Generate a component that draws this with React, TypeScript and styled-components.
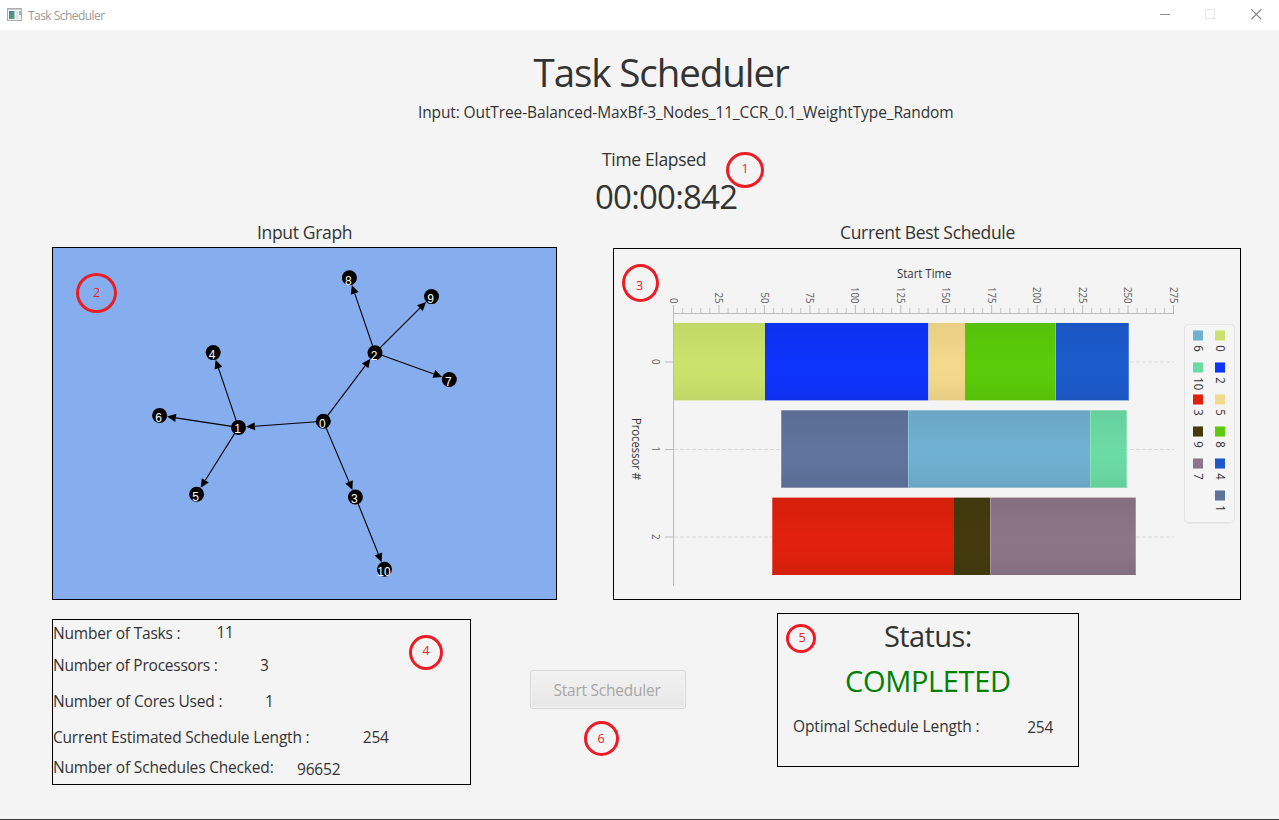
import React from 'react';
import styled, { createGlobalStyle } from 'styled-components';

const UI_FONT = '"Open Sans", "Noto Sans", sans-serif';

const GlobalStyle = createGlobalStyle`
  html, body { margin: 0; padding: 0; background: #f4f4f4; }
  * { box-sizing: border-box; }
`;

const Window = styled.div`
  position: relative;
  display: flex;
  flex-direction: column;
  width: 1279px;
  height: 820px;
  overflow: hidden;
  background: #f4f4f4;
  border-bottom: 1px solid #3a3a3a;
  color: #333;
  font-family: ${UI_FONT};
`;

const TitleBar = styled.header`
  display: flex;
  align-items: center;
  height: 30px;
  flex: none;
  padding-left: 7px;
  padding-right: 17px;
  background: #fff;
`;

const WindowTitle = styled.span`
  flex: 1;
  margin-left: 5px;
  font-size: 12px;
  line-height: 17px;
  letter-spacing: -0.55px;
  color: #999;
`;

const WindowControls = styled.div`
  display: flex;
  gap: 35px;
  height: 11px;
  margin-bottom: 1px;
`;

const Line = styled.div<{ $size: number; $height: number; $left?: number; $top?: number; $spacing?: number; $color?: string }>`
  font-size: ${(p) => p.$size}px;
  line-height: ${(p) => p.$height}px;
  margin-left: ${(p) => p.$left ?? 0}px;
  margin-top: ${(p) => p.$top ?? 0}px;
  letter-spacing: ${(p) => p.$spacing ?? 0}px;
  color: ${(p) => p.$color ?? 'inherit'};
  white-space: nowrap;
`;

const Heading = styled.section`
  display: flex;
  flex-direction: column;
  height: 190px;
  flex: none;
  padding-top: 18px;
`;

const Panels = styled.section`
  display: flex;
  height: 380px;
  flex: none;
  padding-left: 52px;
  gap: 56px;
`;

const PanelColumn = styled.div<{ $width: number }>`
  display: flex;
  flex-direction: column;
  justify-content: space-between;
  width: ${(p) => p.$width}px;
`;

const Frame = styled.div<{ $height: number; $fill?: string }>`
  height: ${(p) => p.$height}px;
  border: 1px solid #000;
  background: ${(p) => p.$fill ?? 'transparent'};
  svg { display: block; }
`;

const Footer = styled.section`
  display: flex;
  align-items: flex-start;
  padding-left: 52px;
`;

const StatsBox = styled.div`
  width: 419px;
  height: 166px;
  margin-top: 19px;
  padding-top: 1px;
  border: 1px solid #000;
`;

const StatusBox = styled.div`
  width: 302px;
  height: 154px;
  margin-top: 13px;
  margin-left: 91px;
  padding-top: 1px;
  border: 1px solid #000;
`;

const Row = styled.div<{ $top: number; $left?: number }>`
  display: flex;
  align-items: flex-start;
  height: 22px;
  margin-top: ${(p) => p.$top}px;
  margin-left: ${(p) => p.$left ?? 0}px;
  font-size: 15.5px;
  line-height: 22px;
  white-space: nowrap;
`;

const RowLabel = styled.span<{ $width: number; $spacing: number; $drop?: number }>`
  flex: none;
  width: ${(p) => p.$width}px;
  padding-top: ${(p) => p.$drop ?? 0}px;
  letter-spacing: ${(p) => p.$spacing}px;
`;

const RowValue = styled.span<{ $drop?: number }>`
  padding-top: ${(p) => p.$drop ?? 0}px;
  letter-spacing: -0.2px;
`;

const StartButton = styled.button`
  width: 156px;
  height: 39px;
  margin: 70px 0 0 59px;
  padding: 0 2px 0 0;
  border: 1px solid #d6d6d6;
  border-radius: 3px;
  background: linear-gradient(#f2f2f2, #e7e7e7);
  box-shadow: inset 0 0 0 1px #f3f3f3;
  font-family: ${UI_FONT};
  font-size: 15.5px;
  line-height: 22px;
  letter-spacing: -0.24px;
  color: #a6a6a6;
`;

const Callout = styled.div<{ $x: number; $y: number; $w: number; $h: number; $pad: number; $shift?: number }>`
  position: absolute;
  left: ${(p) => p.$x}px;
  top: ${(p) => p.$y}px;
  width: ${(p) => p.$w}px;
  height: ${(p) => p.$h}px;
  padding-top: ${(p) => p.$pad}px;
  border: 3px solid #ed1c24;
  border-radius: 50%;
  font-size: 12.5px;
  line-height: 17px;
  text-align: center;
  text-indent: ${(p) => p.$shift ?? 0}px;
  color: #ed1c24;
`;

type GraphNode = { x: number; y: number; base: number };

const nodes: GraphNode[] = [
  { x: 323.3, y: 421.3, base: 428 },
  { x: 238.5, y: 427.4, base: 433 },
  { x: 375, y: 352.8, base: 360 },
  { x: 355.4, y: 497, base: 503 },
  { x: 213.2, y: 352.6, base: 359 },
  { x: 196.6, y: 494.2, base: 501 },
  { x: 159.6, y: 415.4, base: 422 },
  { x: 449.3, y: 379.5, base: 386 },
  { x: 349.4, y: 277.8, base: 285 },
  { x: 431.5, y: 296.6, base: 303 },
  { x: 384.5, y: 569.2, base: 576 },
];

const edges: [number, number][] = [
  [0, 1], [0, 2], [0, 3], [1, 4], [1, 5], [1, 6], [2, 7], [2, 8], [2, 9], [3, 10],
];

function Edge({ from, to }: { from: GraphNode; to: GraphNode }) {
  const length = Math.hypot(to.x - from.x, to.y - from.y);
  const ux = (to.x - from.x) / length;
  const uy = (to.y - from.y) / length;
  const tipX = to.x - ux * 7.6;
  const tipY = to.y - uy * 7.6;
  const backX = tipX - ux * 8.8;
  const backY = tipY - uy * 8.8;
  const half = 4.1;
  return (
    <g>
      <line x1={from.x} y1={from.y} x2={backX} y2={backY} stroke="#000" strokeWidth={1.1} />
      <polygon
        points={`${tipX},${tipY} ${backX - uy * half},${backY + ux * half} ${backX + uy * half},${backY - ux * half}`}
      />
    </g>
  );
}

function InputGraph() {
  return (
    <svg width={503} height={351} viewBox="53 248 503 351">
      {edges.map(([a, b]) => (
        <Edge key={`${a}-${b}`} from={nodes[a]} to={nodes[b]} />
      ))}
      {nodes.map((n, i) => (
        <g key={i}>
          <circle cx={n.x} cy={n.y} r={7.5} />
          <text
            x={i === 10 ? n.x - 0.5 : n.x - 1}
            y={n.base}
            fill="#fff"
            fontSize={12}
            fontFamily='"Liberation Sans", Arial, sans-serif'
            textAnchor="middle"
          >
            {i}
          </text>
        </g>
      ))}
    </svg>
  );
}

const taskColors = [
  '#cde26d', '#5f739c', '#0e33fb', '#e0210d', '#1c5acb', '#f3d98a',
  '#70b0d0', '#8b7587', '#5bcb0a', '#443a0d', '#6bdba5',
];

type Segment = { task: number; x1: number; x2: number };

const bars: { y: number; h: number; top: number; bottom: number; segments: Segment[] }[] = [
  {
    y: 323, h: 78, top: 0, bottom: 0.62,
    segments: [
      { task: 0, x1: 674, x2: 765 },
      { task: 2, x1: 765, x2: 928.5 },
      { task: 5, x1: 928.5, x2: 965 },
      { task: 8, x1: 965, x2: 1056 },
      { task: 4, x1: 1056, x2: 1129 },
    ],
  },
  {
    y: 410, h: 78, top: 0.32, bottom: 0.32,
    segments: [
      { task: 1, x1: 781, x2: 908 },
      { task: 6, x1: 908, x2: 1090 },
      { task: 10, x1: 1090, x2: 1127 },
    ],
  },
  {
    y: 497, h: 78, top: 0.6, bottom: 0,
    segments: [
      { task: 3, x1: 772, x2: 954 },
      { task: 9, x1: 954, x2: 990 },
      { task: 7, x1: 990, x2: 1136 },
    ],
  },
];

const lightLines = [
  [781, 1], [908, 1], [1090, 1], [1126, 1], [772, 2], [990, 2], [1135, 2], [928, 0], [1055, 0], [1128, 0],
];

const legend: { x: number; tasks: number[] }[] = [
  { x: 1215, tasks: [0, 2, 5, 8, 4, 1] },
  { x: 1193, tasks: [6, 10, 3, 9, 7] },
];

const timeToX = (t: number) => 673.5 + (t * 500) / 275;
const ticks = Array.from({ length: 56 }, (_, i) => i * 5);

function Sideways({ x, y, size, length, anchor, fill, children }: {
  x: number; y: number; size: number; length: number; anchor: 'start' | 'middle' | 'end'; fill: string; children: React.ReactNode;
}) {
  return (
    <text
      transform={`translate(${x} ${y}) rotate(90)`}
      fontSize={size}
      textAnchor={anchor}
      textLength={length}
      lengthAdjust="spacingAndGlyphs"
      fill={fill}
    >
      {children}
    </text>
  );
}

function ScheduleChart() {
  return (
    <svg width={626} height={350} viewBox="614 249 626 350">
      <defs>
        <linearGradient id="shade" x1="0" y1="0" x2="0" y2="1">
          <stop offset="0" stopColor="#000" stopOpacity={0.05} />
          <stop offset="0.5" stopColor="#000" stopOpacity={0} />
          <stop offset="0.75" stopColor="#000" stopOpacity={0.01} />
          <stop offset="1" stopColor="#000" stopOpacity={0.06} />
        </linearGradient>
      </defs>

      <text x={897} y={278} fontSize={12} textLength={54.5} lengthAdjust="spacingAndGlyphs" fill="#333">
        Start Time
      </text>
      <Sideways x={632} y={418} size={12} length={62} anchor="start" fill="#333">Processor #</Sideways>

      {ticks.map((t) => {
        const major = t % 25 === 0;
        const x = timeToX(t);
        return (
          <g key={t}>
            <line x1={x} x2={x} y1={major ? 305 : 308} y2={313} stroke={major ? '#bbb' : '#c4c4c4'} />
            {major && (
              <Sideways x={x - 3.9} y={303.6} size={10.3} length={String(t).length * 5.5} anchor="end" fill="#5c5c5c">
                {t}
              </Sideways>
            )}
          </g>
        );
      })}
      <line x1={673} x2={1174} y1={313.5} y2={313.5} stroke="#bbb" />

      {[362, 449.5, 537].map((y, i) => (
        <g key={y}>
          <line x1={665} x2={673} y1={y} y2={y} stroke="#bbb" />
          <line x1={674} x2={1174} y1={y} y2={y} stroke="#dadada" strokeDasharray="4 2" />
          <Sideways x={651.6} y={y - 0.2} size={10.3} length={5.5} anchor="middle" fill="#5c5c5c">{i}</Sideways>
        </g>
      ))}

      {bars.map((bar) => {
        const x1 = bar.segments[0].x1;
        const width = bar.segments[bar.segments.length - 1].x2 - x1;
        return (
          <g key={bar.y}>
            <rect x={x1} y={bar.y} width={width} height={bar.h} fill="#f4f4f4" />
            {bar.segments.map((s) => (
              <rect key={s.task} x={s.x1} y={bar.y} width={s.x2 - s.x1} height={bar.h} fill={taskColors[s.task]} />
            ))}
            <rect x={x1} y={bar.y} width={width} height={bar.h} fill="url(#shade)" />
            <rect x={x1} y={bar.y} width={width} height={1} fill="#f4f4f4" opacity={bar.top} />
            <rect x={x1} y={bar.y + bar.h - 1} width={width} height={1} fill="#f4f4f4" opacity={bar.bottom} />
          </g>
        );
      })}
      {lightLines.map(([x, row]) => (
        <rect key={x} x={x} y={bars[row].y} width={1} height={77} fill="#fff" opacity={0.25} />
      ))}
      <line x1={673.5} x2={673.5} y1={313} y2={586} stroke="#bbb" />

      <rect x={1184.5} y={324.5} width={50} height={198} rx={4} fill="#f5f5f5" stroke="#e3e3e3" />
      <path d="M1188 523.5h43" stroke="#e9e9e9" />
      {legend.map((column) =>
        column.tasks.map((task, i) => (
          <g key={task}>
            <rect x={column.x} y={330 + i * 32} width={10} height={11} fill={taskColors[task]} opacity={0.55} />
            <rect x={column.x} y={331 + i * 32} width={10} height={9} fill={taskColors[task]} />
            <Sideways x={column.x + 1} y={345.2 + i * 32} size={12} length={String(task).length * 6.5} anchor="start" fill="#333">
              {task}
            </Sideways>
          </g>
        )),
      )}
    </svg>
  );
}

function AppIcon() {
  return (
    <svg width={16} height={14} viewBox="0 0 16 14">
      <defs>
        <linearGradient id="pane" x1="0" y1="0" x2="1" y2="1">
          <stop offset="0" stopColor="#4a7d9c" />
          <stop offset="1" stopColor="#5aa36f" />
        </linearGradient>
      </defs>
      <rect x="0.5" y="0.5" width="14" height="12" fill="#f3f3f5" stroke="#a9acb3" />
      <path d="M1 1.5h13" stroke="#c9ccd4" />
      <rect x="2" y="3" width="5.5" height="8" fill="url(#pane)" />
      <rect x="8.5" y="3" width="3" height="8" fill="#dfe1e4" />
      <rect x="12" y="3" width="2" height="4" fill="#8fc0a4" />
    </svg>
  );
}

export default function App() {
  return (
    <>
      <GlobalStyle />
      <Window>
        <TitleBar>
          <AppIcon />
          <WindowTitle>Task Scheduler</WindowTitle>
          <WindowControls>
            <svg width={10} height={11}><path d="M0 5.5h10" stroke="#8c8c8c" /></svg>
            <svg width={11} height={11}><path d="M.5.5h9v9h-9z" fill="none" stroke="#e6e6e6" /></svg>
            <svg width={11} height={11}><path d="M.3.3l10 10M10.3.3l-10 10" stroke="#808080" strokeWidth={1.1} /></svg>
          </WindowControls>
        </TitleBar>

        <Heading>
          <Line $size={38.5} $height={48} $left={533.5} $spacing={-1.07}>Task Scheduler</Line>
          <Line $size={15.5} $height={22} $left={418} $top={5} $spacing={-0.12}>
            Input: OutTree-Balanced-MaxBf-3_Nodes_11_CCR_0.1_WeightType_Random
          </Line>
          <Line $size={17.5} $height={24} $left={602} $top={24} $spacing={-0.33}>Time Elapsed</Line>
          <Line $size={33} $height={44} $left={595} $top={4} $spacing={-0.8}>00:00:842</Line>
        </Heading>

        <Panels>
          <PanelColumn $width={505}>
            <Line $size={17.5} $height={24} $left={205} $spacing={-0.33}>Input Graph</Line>
            <Frame $height={353} $fill="#86aeef"><InputGraph /></Frame>
          </PanelColumn>
          <PanelColumn $width={628}>
            <Line $size={17.5} $height={24} $left={227} $spacing={-0.33}>Current Best Schedule</Line>
            <Frame $height={352}><ScheduleChart /></Frame>
          </PanelColumn>
        </Panels>

        <Footer>
          <StatsBox>
            <Row $top={0}>
              <RowLabel $width={163.4} $spacing={-0.2} $drop={1}>Number of Tasks :</RowLabel>
              <RowValue>11</RowValue>
            </Row>
            <Row $top={11}>
              <RowLabel $width={207} $spacing={-0.23}>Number of Processors :</RowLabel>
              <RowValue>3</RowValue>
            </Row>
            <Row $top={14}>
              <RowLabel $width={212} $spacing={-0.17}>Number of Cores Used :</RowLabel>
              <RowValue>1</RowValue>
            </Row>
            <Row $top={14}>
              <RowLabel $width={309.8} $spacing={-0.2}>Current Estimated Schedule Length :</RowLabel>
              <RowValue>254</RowValue>
            </Row>
            <Row $top={8}>
              <RowLabel $width={244} $spacing={-0.18}>Number of Schedules Checked:</RowLabel>
              <RowValue $drop={2}>96652</RowValue>
            </Row>
          </StatsBox>

          <StartButton disabled>Start Scheduler</StartButton>

          <StatusBox>
            <Line $size={29} $height={41} $left={106} $spacing={-0.6}>Status:</Line>
            <Line $size={29} $height={41} $left={67} $top={4} $spacing={-0.33} $color="#008000">COMPLETED</Line>
            <Row $top={14} $left={15}>
              <RowLabel $width={234.2} $spacing={-0.12}>Optimal Schedule Length :</RowLabel>
              <RowValue $drop={1}>254</RowValue>
            </Row>
          </StatusBox>
        </Footer>

        <Callout $x={726} $y={152} $w={38} $h={36} $pad={5}>1</Callout>
        <Callout $x={76} $y={273} $w={41} $h={40} $pad={8}>2</Callout>
        <Callout $x={622} $y={264} $w={37} $h={38} $pad={10} $shift={-2}>3</Callout>
        <Callout $x={409} $y={635} $w={34} $h={35} $pad={4}>4</Callout>
        <Callout $x={786} $y={624} $w={30} $h={29} $pad={2} $shift={2}>5</Callout>
        <Callout $x={584} $y={721} $w={35} $h={35} $pad={6} $shift={-1}>6</Callout>
      </Window>
    </>
  );
}
